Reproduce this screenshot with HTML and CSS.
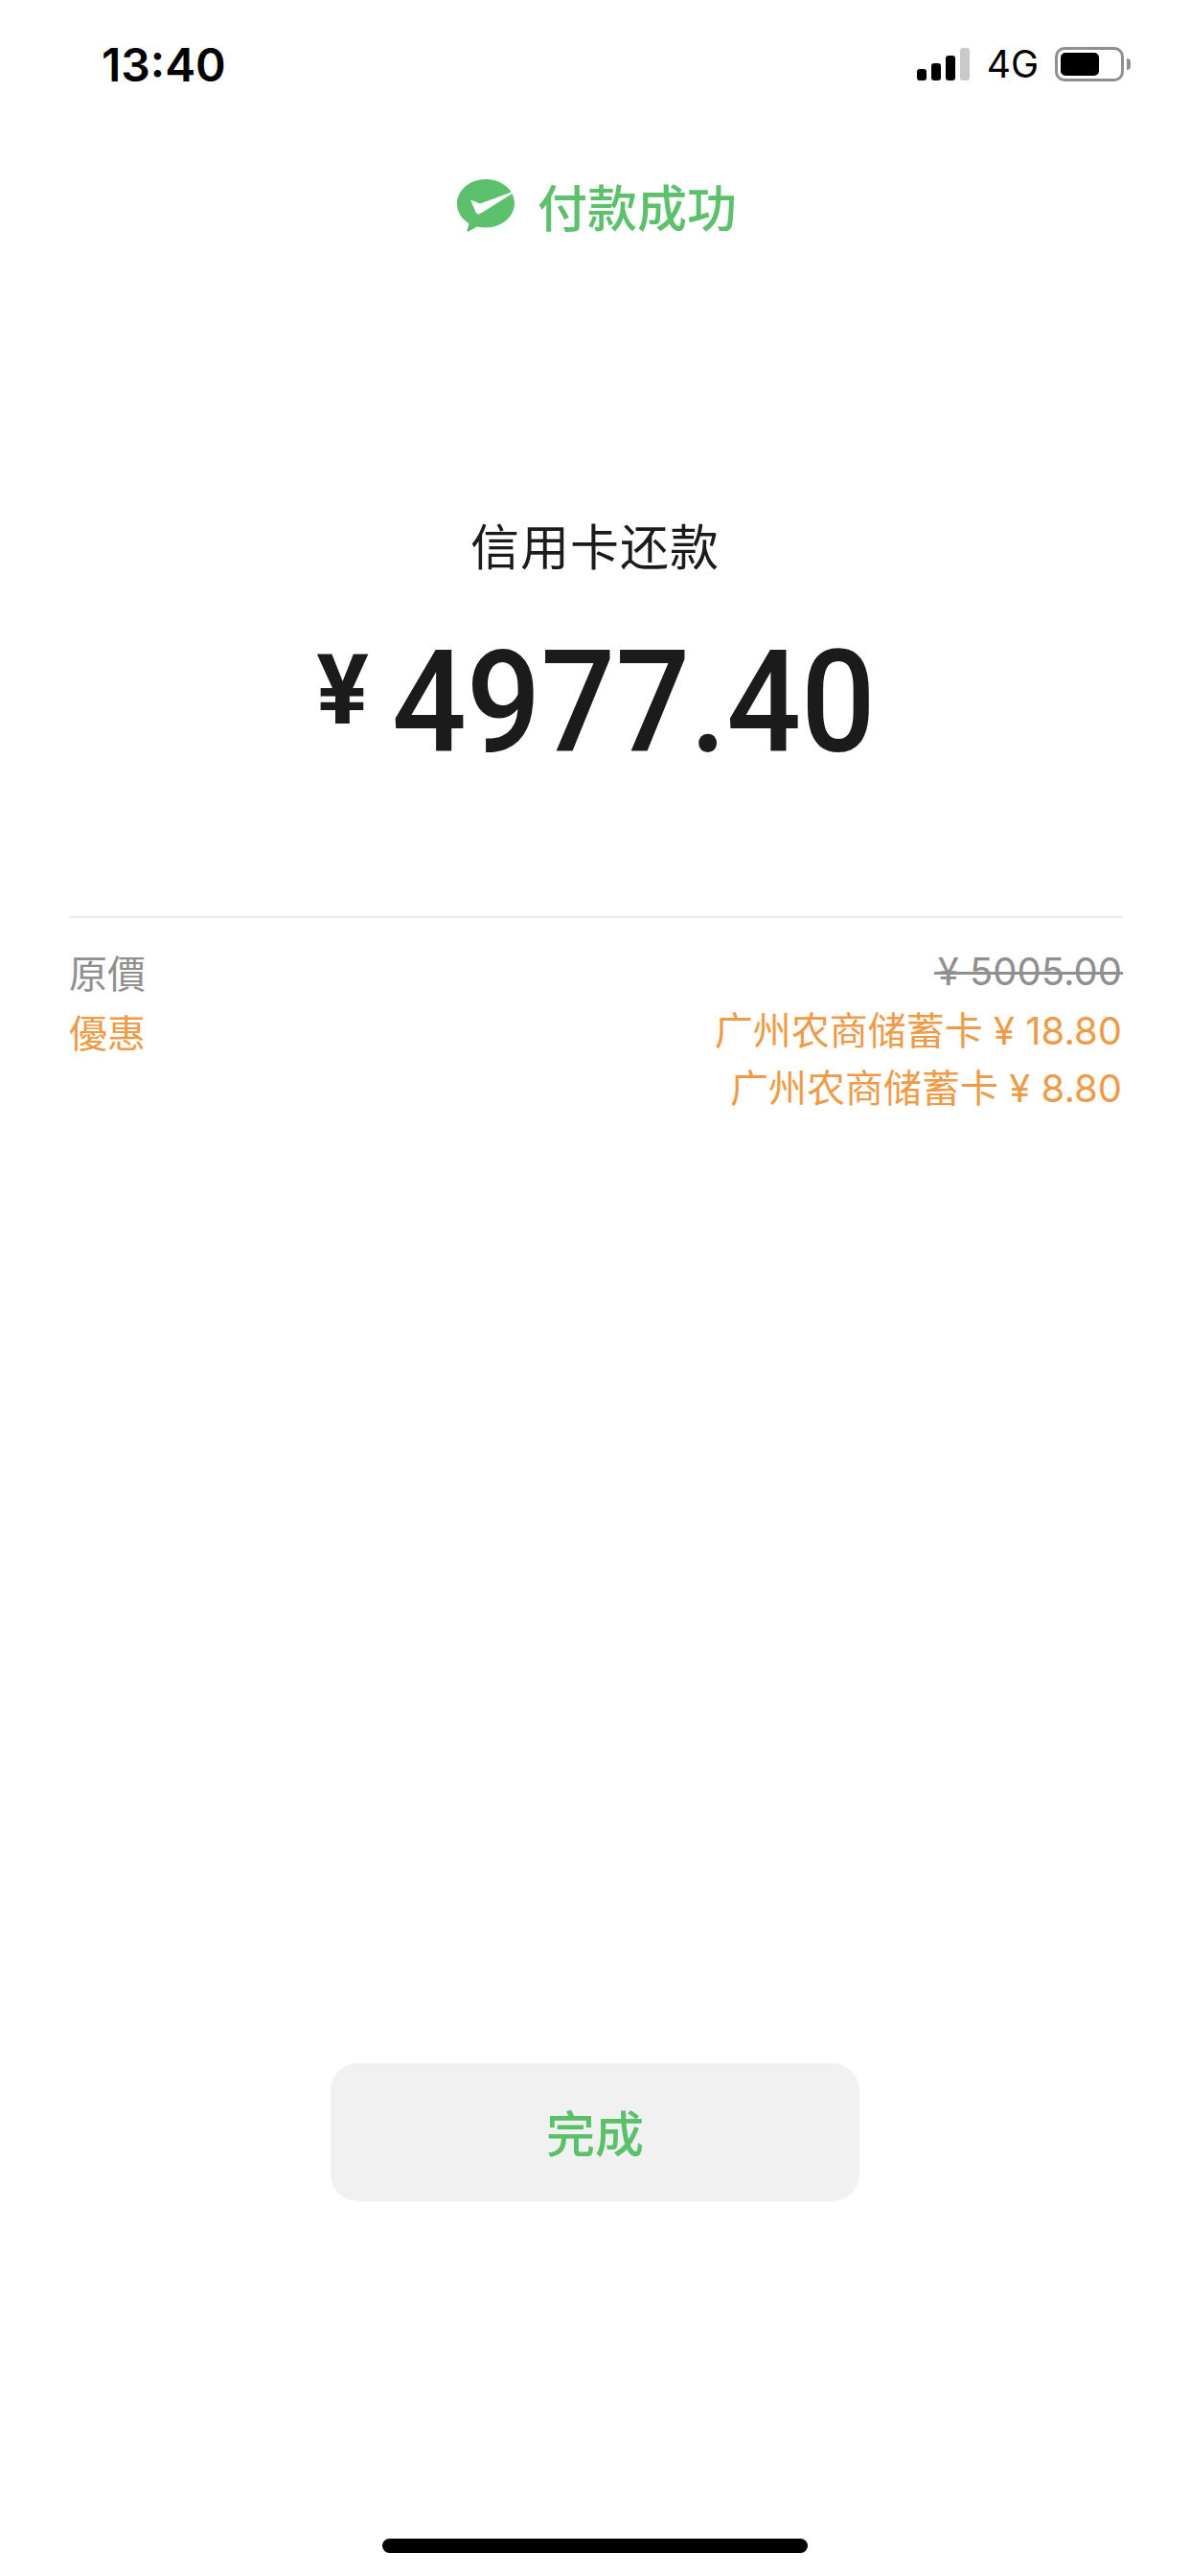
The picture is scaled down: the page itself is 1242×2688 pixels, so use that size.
FILE: index.html
```html
<!DOCTYPE html>
<html lang="zh-CN">
<head>
    <meta charset="UTF-8">
    <meta name="viewport" content="width=device-width, initial-scale=1.0">
    <title>付款成功</title>
    <link rel="stylesheet" href="styles.css">
</head>
<body>
    <div class="page">
        <div class="status-bar">
            <div class="time">13:40</div>
            <div class="status-icons">
                <div class="signal">
                    <span class="bar bar-1"></span>
                    <span class="bar bar-2"></span>
                    <span class="bar bar-3"></span>
                    <span class="bar bar-4"></span>
                </div>
                <div class="network">4G</div>
                <div class="battery">
                    <div class="battery-body"><div class="battery-level"></div></div>
                    <div class="battery-nub"></div>
                </div>
            </div>
        </div>

        <header class="result-title">
            <svg class="pay-logo" width="60" height="55" viewBox="0 0 60 55">
                <path fill="#5cc06c" d="M30 0C13.4 0 0 11.4 0 25.5c0 8.6 5 16.200 12.600 20.800L10.500 53.500c-.2 1 .6 1.500 1.500 1l9-5c2.800.6 5.900 1 9 1 16.600 0 30-11.400 30-25.500S46.600 0 30 0z"/>
                <path fill="#fff" d="M14 21.500l10 4L60 12.300v1.200L24 36c-1.500.9-3.500.5-4.200-1.200z"/>
            </svg>
            <span>付款成功</span>
        </header>

        <section class="summary">
            <div class="merchant">信用卡还款</div>
            <div class="amount"><span class="currency">¥</span><span class="digits">4977.40</span></div>
        </section>

        <section class="details">
            <div class="detail-row">
                <div class="detail-label tc">原價</div>
                <div class="detail-value"><span class="old-price">¥ 5005.00</span></div>
            </div>
            <div class="detail-row discount">
                <div class="detail-label tc">優惠</div>
                <div class="detail-value">
                    <div class="discount-line">广州农商储蓄卡 ¥ 18.80</div>
                    <div class="discount-line">广州农商储蓄卡 ¥ 8.80</div>
                </div>
            </div>
        </section>

        <div class="actions">
            <button type="button" class="done-btn">完成</button>
        </div>

        <div class="home-indicator"></div>
    </div>
</body>
</html>
```

FILE: styles.css
```css
/* Global Styles */
body {
    margin: 0;
    padding: 0;
    background: #fff;
    font-family: 'Inter', 'Noto Sans CJK SC', sans-serif;
    color: #1b1b1b;
}

.page {
    width: 1242px;
    height: 2688px;
    display: flex;
    flex-direction: column;
    overflow: hidden;
}

/* Status bar */
.status-bar {
    height: 184px;
    box-sizing: border-box;
    padding: 42px 62px 0 106px;
    display: flex;
    justify-content: space-between;
    align-items: flex-start;
}

.time {
    font-size: 48px;
    line-height: 52px;
    font-weight: 600;
    color: #000;
}

.status-icons {
    display: flex;
    align-items: center;
    height: 36px;
    margin-top: 7px;
}

.signal {
    display: flex;
    align-items: flex-end;
    gap: 5px;
    height: 34px;
    margin-right: 18px;
}

.bar {
    width: 10px;
    background: #000;
    border-radius: 3px;
}

.bar-1 { height: 12px; }
.bar-2 { height: 18px; }
.bar-3 { height: 26px; }
.bar-4 { height: 34px; background: #c9c9c9; }

.network {
    font-size: 39px;
    line-height: 36px;
    color: #000;
    margin-right: 17px;
}

.battery {
    display: flex;
    align-items: center;
    gap: 3px;
}

.battery-body {
    width: 72px;
    height: 36px;
    box-sizing: border-box;
    border: 3px solid #8f8f8f;
    border-radius: 10px;
    padding: 3px;
}

.battery-level {
    width: 40px;
    height: 24px;
    background: #000;
    border-radius: 5px;
}

.battery-nub {
    width: 4px;
    height: 12px;
    background: #8f8f8f;
    border-radius: 0 4px 4px 0;
}

/* Title */
.result-title {
    display: flex;
    justify-content: center;
    align-items: center;
    gap: 24px;
    height: 60px;
    padding-left: 4px;
    font-size: 52px;
    font-weight: 500;
    color: #5cc06c;
}

.pay-logo {
    display: block;
}

/* Amount */
.summary {
    margin-top: 298px;
    text-align: center;
}

.merchant {
    font-size: 51px;
    line-height: 60px;
    font-weight: 400;
    letter-spacing: 1px;
}

.amount {
    margin-top: 52px;
    padding-right: 6px;
    display: flex;
    justify-content: center;
    align-items: flex-start;
    height: 160px;
    font-family: 'Roboto', sans-serif;
    font-weight: 500;
}

.currency {
    font-size: 102px;
    line-height: 100px;
    font-weight: 700;
    margin-top: 16px;
    margin-right: 24px;
}

.digits {
    display: inline-block;
    font-size: 148px;
    line-height: 160px;
    width: 497px;
    transform: scaleX(0.925);
    transform-origin: left center;
    white-space: nowrap;
}

/* Price details */
.details {
    margin: 142px 71px 0 72px;
    padding-top: 26px;
    border-top: 2px solid #e8e8e8;
    font-size: 40px;
    line-height: 60px;
    color: #8f8f8f;
}

.detail-row {
    display: flex;
    justify-content: space-between;
}

.detail-row.discount {
    margin-top: 2px;
    color: #ee9b48;
}

.tc {
    font-family: 'Noto Sans CJK TC', sans-serif;
    font-weight: 400;
}

.detail-value {
    text-align: right;
    font-weight: 400;
}

.old-price {
    position: relative;
    display: inline-block;
}

/* line runs a bit past the text, so not text-decoration */
.old-price::after {
    content: '';
    position: absolute;
    left: -4px;
    right: -1px;
    top: 30px;
    height: 3px;
    background: #8f8f8f;
}

/* Button */
.actions {
    margin-top: auto;
    display: flex;
    justify-content: center;
}

.done-btn {
    width: 552px;
    height: 144px;
    border: none;
    border-radius: 28px;
    background: #f1f1f1;
    color: #5ac06a;
    font-family: 'Noto Sans CJK SC', sans-serif;
    font-size: 51px;
    font-weight: 500;
    padding-bottom: 4px;
}

.home-indicator {
    width: 444px;
    height: 15px;
    margin: 352px auto 24px;
    background: #000;
    border-radius: 8px;
}
```
